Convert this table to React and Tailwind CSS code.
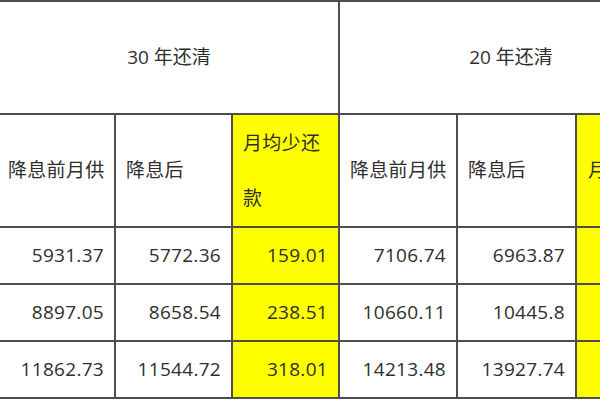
const ROWS = [
  ["5931.37", "5772.36", "159.01", "7106.74", "6963.87", ""],
  ["8897.05", "8658.54", "238.51", "10660.11", "10445.8", ""],
  ["11862.73", "11544.72", "318.01", "14213.48", "13927.74", ""],
];

const YELLOW = [2, 5];

export default function App() {
  return (
    <div className="w-[600px] h-[400px] overflow-hidden bg-white font-['Open_Sans','Noto_Sans_CJK_SC',sans-serif] text-[19px] text-[#2e2e2e]">
      <div className="grid w-max grid-cols-[116px_117px_107px_118px_119px_107px] grid-rows-[113px_113px_57px_57px_57px] border-t-2 border-[#4d4d4d]">
        {/* period headers */}
        <div className="col-span-3 flex items-center justify-center border-r-2 border-b-2 border-[#4d4d4d]">
          30 年还清
        </div>
        <div className="col-span-3 flex items-center justify-center border-r-2 border-b-2 border-[#4d4d4d]">
          20 年还清
        </div>

        {/* column headers, 30 years */}
        <div className="flex items-center pl-[8px] tracking-[0.3px] border-r-2 border-b-2 border-[#4d4d4d]">
          降息前月供
        </div>
        <div className="flex items-center pl-[10px] tracking-[0.3px] border-r-2 border-b-2 border-[#4d4d4d]">
          降息后
        </div>
        <div className="flex items-center pl-[10px] leading-[55px] tracking-[0.3px] bg-[#ffff00] border-r-2 border-b-2 border-[#4d4d4d]">
          <span>
            月均少还
            <br />
            款
          </span>
        </div>

        {/* column headers, 20 years */}
        <div className="flex items-center pl-[10px] tracking-[0.3px] border-r-2 border-b-2 border-[#4d4d4d]">
          降息前月供
        </div>
        <div className="flex items-center pl-[10px] tracking-[0.3px] border-r-2 border-b-2 border-[#4d4d4d]">
          降息后
        </div>
        <div className="flex items-center pl-[11px] whitespace-nowrap tracking-[0.3px] bg-[#ffff00] border-r-2 border-b-2 border-[#4d4d4d]">
          月均少还款
        </div>

        {/* data */}
        {ROWS.map((row, r) =>
          row.map((v, c) => (
            <div
              key={r + "-" + c}
              className={
                "flex items-center justify-end pr-[10px] tracking-[0.3px] border-r-2 border-b-2 border-[#4d4d4d] " +
                (YELLOW.includes(c) ? "bg-[#ffff00]" : "bg-white")
              }
            >
              {v}
            </div>
          ))
        )}
      </div>
    </div>
  );
}
